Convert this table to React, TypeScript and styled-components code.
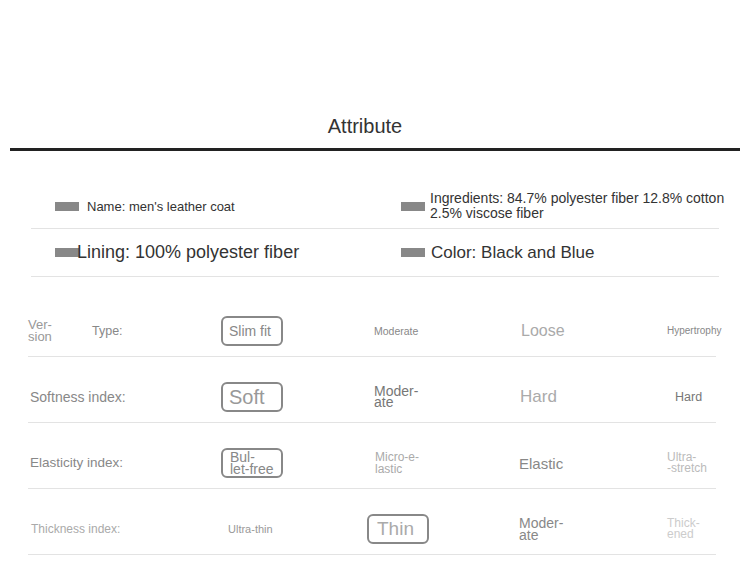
import React from "react";
import styled, { createGlobalStyle } from "styled-components";

const Global = createGlobalStyle`
  html, body { margin: 0; padding: 0; background: #fff; }
  body {
    font-family: "Liberation Sans", Arial, sans-serif;
    width: 750px;
    height: 576px;
    overflow: hidden;
  }
`;

const Page = styled.div`
  width: 750px;
  height: 576px;
  display: flex;
  flex-direction: column;
  background: #fff;
`;

const Header = styled.header`
  padding-top: 114px;
  display: flex;
  flex-direction: column;
  align-items: center;
`;

const Title = styled.h1`
  margin: 0 20px 0 0;
  font-size: 20px;
  line-height: 24px;
  font-weight: 400;
  color: #333;
`;

const Rule = styled.div`
  align-self: stretch;
  margin: 10px 10px 0 10px;
  height: 3px;
  background: #222;
`;

const InfoSection = styled.section`
  margin: 33px 0 0 31px;
  width: 688px;
  display: flex;
  flex-direction: column;
`;

const InfoRow = styled.div<{ $h: number }>`
  display: grid;
  grid-template-columns: 370px 1fr;
  align-items: center;
  box-sizing: border-box;
  height: ${(p) => p.$h}px;
  border-bottom: 1px solid #e3e3e3;
`;

const InfoCell = styled.div<{ $pl: number }>`
  display: flex;
  align-items: center;
  padding-left: ${(p) => p.$pl}px;
`;

const Swatch = styled.span`
  flex: none;
  width: 24px;
  height: 9px;
  background: #888;
`;

const InfoText = styled.span<{ $size: number; $gap: number; $w?: number; $lh?: number }>`
  margin-left: ${(p) => p.$gap}px;
  font-size: ${(p) => p.$size}px;
  line-height: ${(p) => p.$lh ?? Math.round(p.$size * 1.15)}px;
  color: #333;
  ${(p) => (p.$w ? `width: ${p.$w}px; flex: none;` : "white-space: nowrap;")}
`;

const SpecSection = styled.section`
  margin: 14px 0 0 28px;
  width: 688px;
  display: flex;
  flex-direction: column;
`;

const SpecRow = styled.div`
  display: grid;
  grid-template-columns: 193px 146px 146px 146px 57px;
  align-items: center;
  box-sizing: border-box;
  height: 66px;
  padding-top: 15px;
  border-bottom: 1px solid #e3e3e3;
`;

const Label = styled.div<{ $size: number; $color: string; $pl: number }>`
  display: flex;
  align-items: center;
  padding-left: ${(p) => p.$pl}px;
  font-size: ${(p) => p.$size}px;
  line-height: 14px;
  color: ${(p) => p.$color};
  white-space: nowrap;
`;

const VersionWord = styled.span`
  width: 64px;
  font-size: 13px;
  line-height: 12px;
  color: #999;
`;

const TypeWord = styled.span`
  font-size: 12.5px;
  color: #888;
`;

const Cell = styled.div<{ $pl: number }>`
  display: flex;
  align-items: center;
  padding-left: ${(p) => p.$pl}px;
  white-space: nowrap;
`;

const Plain = styled.span<{ $size: number; $color: string; $lh: number }>`
  font-size: ${(p) => p.$size}px;
  line-height: ${(p) => p.$lh}px;
  color: ${(p) => p.$color};
`;

const Boxed = styled.span<{ $size: number; $color: string; $lh: number; $pad: number }>`
  display: flex;
  align-items: center;
  box-sizing: border-box;
  width: 62px;
  height: 30px;
  border: 2px solid #888;
  border-radius: 6px;
  padding-left: ${(p) => p.$pad}px;
  font-size: ${(p) => p.$size}px;
  line-height: ${(p) => p.$lh}px;
  color: ${(p) => p.$color};
`;

type SpecCell = {
  lines: string[];
  size: number;
  color: string;
  pl: number;
  lh?: number;
  boxed?: boolean;
  pad?: number;
};

type Spec = {
  label: React.ReactNode;
  labelSize: number;
  labelColor: string;
  labelPl: number;
  cells: SpecCell[];
};

const specs: Spec[] = [
  {
    label: (
      <>
        <VersionWord>
          Ver-
          <br />
          sion
        </VersionWord>
        <TypeWord>Type:</TypeWord>
      </>
    ),
    labelSize: 13,
    labelColor: "#888",
    labelPl: 0,
    cells: [
      { lines: ["Slim fit"], size: 14, color: "#888", pl: 0, boxed: true, pad: 6 },
      { lines: ["Moderate"], size: 10.5, color: "#888", pl: 7 },
      { lines: ["Loose"], size: 16, color: "#aaa", pl: 8 },
      { lines: ["Hypertrophy"], size: 10, color: "#888", pl: 8 },
    ],
  },
  {
    label: "Softness index:",
    labelSize: 14,
    labelColor: "#888",
    labelPl: 2,
    cells: [
      { lines: ["Soft"], size: 20, color: "#999", pl: 0, boxed: true, pad: 6 },
      { lines: ["Moder-", "ate"], size: 14, color: "#777", pl: 7, lh: 11 },
      { lines: ["Hard"], size: 17, color: "#aaa", pl: 7 },
      { lines: ["Hard"], size: 12.5, color: "#777", pl: 16 },
    ],
  },
  {
    label: "Elasticity index:",
    labelSize: 13.5,
    labelColor: "#888",
    labelPl: 2,
    cells: [
      { lines: ["Bul-", "let-free"], size: 14, color: "#888", pl: 0, lh: 12, boxed: true, pad: 7 },
      { lines: ["Micro-e-", "lastic"], size: 12, color: "#aaa", pl: 8, lh: 12 },
      { lines: ["Elastic"], size: 15, color: "#888", pl: 6 },
      { lines: ["Ultra-", "-stretch"], size: 12, color: "#bbb", pl: 8, lh: 11 },
    ],
  },
  {
    label: "Thickness index:",
    labelSize: 12,
    labelColor: "#aaa",
    labelPl: 3,
    cells: [
      { lines: ["Ultra-thin"], size: 11, color: "#999", pl: 7 },
      { lines: ["Thin"], size: 19, color: "#aaa", pl: 0, boxed: true, pad: 8 },
      { lines: ["Moder-", "ate"], size: 14, color: "#888", pl: 6, lh: 12 },
      { lines: ["Thick-", "ened"], size: 12, color: "#ccc", pl: 8, lh: 11 },
    ],
  },
];

const renderLines = (lines: string[]) =>
  lines.map((l, i) => (
    <React.Fragment key={i}>
      {i > 0 && <br />}
      {l}
    </React.Fragment>
  ));

export default function App() {
  return (
    <Page>
      <Global />
      <Header>
        <Title>Attribute</Title>
      </Header>
      <Rule />
      <InfoSection>
        <InfoRow $h={45}>
          <InfoCell $pl={24}>
            <Swatch />
            <InfoText $size={13} $gap={8}>
              Name: men's leather coat
            </InfoText>
          </InfoCell>
          <InfoCell $pl={0}>
            <Swatch />
            <InfoText $size={14} $gap={5} $w={310} $lh={15}>
              Ingredients: 84.7% polyester fiber 12.8% cotton 2.5% viscose fiber
            </InfoText>
          </InfoCell>
        </InfoRow>
        <InfoRow $h={48}>
          <InfoCell $pl={24}>
            <Swatch />
            <InfoText $size={18} $gap={-2}>
              Lining: 100% polyester fiber
            </InfoText>
          </InfoCell>
          <InfoCell $pl={0}>
            <Swatch />
            <InfoText $size={17} $gap={6}>
              Color: Black and Blue
            </InfoText>
          </InfoCell>
        </InfoRow>
      </InfoSection>
      <SpecSection>
        {specs.map((s, i) => (
          <SpecRow key={i}>
            <Label $size={s.labelSize} $color={s.labelColor} $pl={s.labelPl}>
              {s.label}
            </Label>
            {s.cells.map((c, j) => (
              <Cell key={j} $pl={c.pl}>
                {c.boxed ? (
                  <Boxed
                    $size={c.size}
                    $color={c.color}
                    $lh={c.lh ?? Math.round(c.size * 1.15)}
                    $pad={c.pad ?? 6}
                  >
                    <span>{renderLines(c.lines)}</span>
                  </Boxed>
                ) : (
                  <Plain $size={c.size} $color={c.color} $lh={c.lh ?? Math.round(c.size * 1.15)}>
                    {renderLines(c.lines)}
                  </Plain>
                )}
              </Cell>
            ))}
          </SpecRow>
        ))}
      </SpecSection>
    </Page>
  );
}
